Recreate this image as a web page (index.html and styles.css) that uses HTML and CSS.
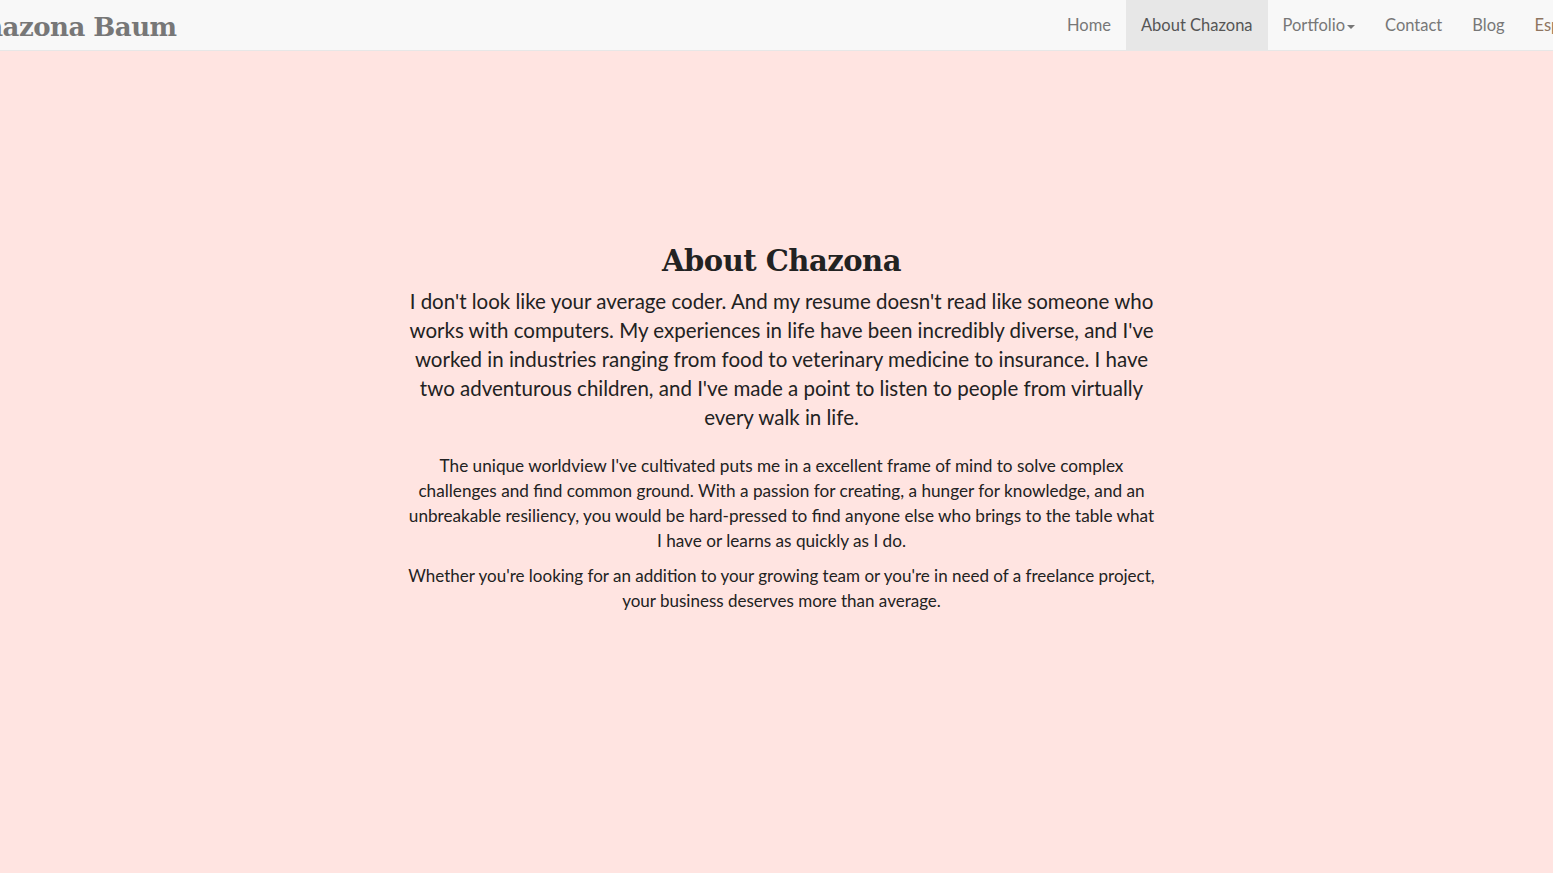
FILE: index.html
```html
<!DOCTYPE html>
<html lang="en">
<head>
<meta charset="utf-8">
<title>About Chazona</title>
<link rel="stylesheet" href="styles.css">
</head>
<body>
<nav class="navbar">
  <div class="navbar-inner">
    <a class="brand" href="#">Chazona Baum</a>
    <ul class="nav">
      <li><a href="#">Home</a></li>
      <li class="active"><a href="#">About Chazona</a></li>
      <li><a href="#">Portfolio<span class="caret"></span></a></li>
      <li><a href="#">Contact</a></li>
      <li><a href="#">Blog</a></li>
      <li><a class="lang" href="#">Español</a></li>
    </ul>
  </div>
</nav>
<main class="about">
  <div class="about-inner">
    <h1 class="title">About Chazona</h1>
    <p class="lead">I don't look like your average coder. And my resume doesn't read like someone who works with computers. My experiences in life have been incredibly diverse, and I've worked in industries ranging from food to veterinary medicine to insurance. I have two adventurous children, and I've made a point to listen to people from virtually every walk in life.</p>
    <p class="copy">The unique worldview I've cultivated puts me in a excellent frame of mind to solve complex challenges and find common ground. With a passion for creating, a hunger for knowledge, and an unbreakable resiliency, you would be hard-pressed to find anyone else who brings to the table what I have or learns as quickly as I do.</p>
    <p class="copy copy-closing">Whether you're looking for an addition to your growing team or you're in need of a freelance project, your business deserves more than average.</p>
  </div>
</main>
</body>
</html>
```
FILE: styles.css
```css
html, body {
  margin: 0;
  padding: 0;
  height: 100%;
}
body {
  background: #ffe4e1;
  color: #222;
  font-family: Lato, "Liberation Sans", sans-serif;
  overflow: hidden;
}
.navbar {
  height: 50px;
  background: #f8f8f8;
  border-bottom: 1px solid #e7e7e7;
  overflow: hidden;
}
.navbar-inner {
  display: flex;
  justify-content: space-between;
  align-items: stretch;
  height: 50px;
  margin-left: -36px;
  margin-right: -53px;
}
.brand {
  font-family: "DejaVu Serif", serif;
  font-weight: bold;
  font-size: 26px;
  color: #777;
  text-decoration: none;
  line-height: 54px;
  letter-spacing: -0.5px;
}
.nav {
  display: flex;
  list-style: none;
  margin: 0;
  padding: 0;
}
.nav a {
  display: block;
  padding: 0 15px;
  line-height: 50px;
  font-size: 16.5px;
  color: #777;
  text-decoration: none;
}
.nav .active a {
  background: #e7e7e7;
  color: #555;
}
.nav .lang {
  color: #8f7560;
}
.caret {
  display: inline-block;
  width: 0;
  height: 0;
  margin-left: 2px;
  vertical-align: middle;
  border-top: 4px solid #777;
  border-left: 4px solid transparent;
  border-right: 4px solid transparent;
}
.about {
  display: flex;
  justify-content: center;
  padding: 190px 0 0 10px;
}
.about-inner {
  width: 750px;
  text-align: center;
}
.title {
  font-family: "DejaVu Serif", serif;
  font-weight: bold;
  font-size: 29px;
  letter-spacing: -0.5px;
  color: #222;
  margin: 0 0 6px;
  line-height: 40px;
}
.lead {
  font-size: 20.5px;
  line-height: 29px;
  margin: 0 0 21px;
}
.copy {
  font-size: 17.18px;
  line-height: 25px;
  margin: 0 0 10px;
}
.copy-closing {
  font-size: 17px;
}
```
